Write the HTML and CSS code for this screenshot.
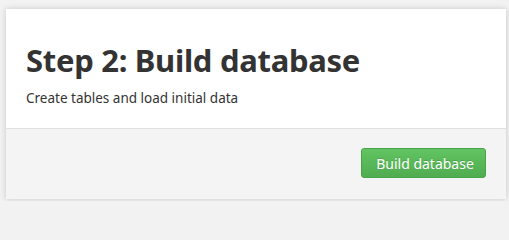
FILE: index.html
```html
<!DOCTYPE html>
<html>
<head>
<meta charset="utf-8">
<link rel="stylesheet" href="styles.css">
</head>
<body>
<div class="card">
  <div class="card-body">
    <h1 class="title">Step 2: Build database</h1>
    <p class="subtitle">Create tables and load initial data</p>
  </div>
  <div class="card-footer">
    <button class="btn-success">Build database</button>
  </div>
</div>
</body>
</html>
```
FILE: styles.css
```css
html, body {
  margin: 0;
  padding: 0;
  background: #f2f2f2;
}
body {
  font-family: "Noto Sans", "Open Sans", sans-serif;
  color: #333;
  padding: 9px 3px 2px 6px;
  height: 201px;
  box-sizing: border-box;
  overflow: hidden;
}
.card {
  background: #fff;
  box-shadow: 0 0 6px rgba(0,0,0,0.18);
  width: 500px;
  height: 190px;
  display: flex;
  flex-direction: column;
}
.card-body {
  padding: 31px 20px 0 20px;
  height: 120px;
  box-sizing: border-box;
  border-bottom: 1px solid #e0e0e0;
}
.title {
  margin: 0;
  font-size: 31px;
  font-weight: 700;
  line-height: 40px;
  color: #333;
  letter-spacing: -0.3px;
}
.subtitle {
  margin: 9px 0 0 0;
  font-size: 13.5px;
  line-height: 18px;
  color: #333;
}
.card-footer {
  flex: 1;
  background: #f4f4f4;
  display: flex;
  justify-content: flex-end;
  align-items: flex-start;
  padding: 19px 20px 0 0;
}
.btn-success {
  font-family: inherit;
  font-size: 14px;
  color: #fff;
  background: linear-gradient(#62c462, #4fac4f);
  border: 1px solid #47a447;
  border-radius: 3px;
  height: 30px;
  width: 125px;
  padding: 0 0 0 3px;
  text-shadow: 0 -1px 0 rgba(0,0,0,0.15);
}
```
